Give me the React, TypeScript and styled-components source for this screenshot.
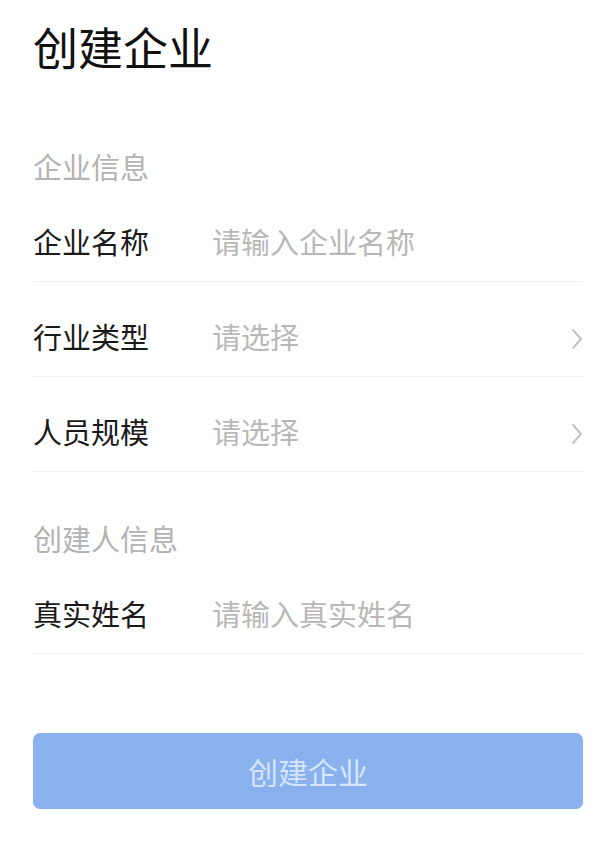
import styled, { createGlobalStyle } from "styled-components";

const GlobalStyle = createGlobalStyle`
  body {
    margin: 0;
    background: #ffffff;
    font-family: "Noto Sans CJK SC", "Noto Sans", sans-serif;
  }
`;

const Page = styled.div`
  padding: 20px 23px 0 33px;
`;

const Title = styled.h1`
  margin: 0 0 26px;
  font-size: 45px;
  line-height: 54px;
  font-weight: 400;
  color: #111111;
`;

const Section = styled.section`
  padding-top: 46px;
`;

const SectionTitle = styled.div`
  font-size: 29px;
  line-height: 41px;
  color: #b3b3b3;
`;

const Row = styled.label`
  display: flex;
  align-items: center;
  padding: 34px 0 19px;
  border-bottom: 1px solid #efefef;
`;

const Label = styled.span`
  width: 179px;
  flex-shrink: 0;
  font-size: 29px;
  line-height: 41px;
  color: #1a1a1a;
`;

const Input = styled.input`
  flex: 1;
  min-width: 0;
  border: none;
  outline: none;
  padding: 0;
  background: transparent;
  font-family: inherit;
  font-size: 29px;
  line-height: 41px;
  color: #1a1a1a;
  &::placeholder {
    color: #b8b8b8;
  }
`;

const Picker = styled.span`
  flex: 1;
  font-size: 29px;
  line-height: 41px;
  color: #b8b8b8;
`;

const Chevron = styled.svg`
  width: 12px;
  height: 22px;
  margin-top: 4px;
  flex-shrink: 0;
`;

const SubmitButton = styled.button`
  display: block;
  width: 100%;
  height: 76px;
  margin-top: 79px;
  border: none;
  border-radius: 7px;
  background: #88b1ee;
  font-family: inherit;
  font-size: 30px;
  color: #d6e5f9;
  cursor: pointer;
`;

interface IField {
  label: string;
  placeholder: string;
  select?: boolean;
}

const companyFields: IField[] = [
  { label: "企业名称", placeholder: "请输入企业名称" },
  { label: "行业类型", placeholder: "请选择", select: true },
  { label: "人员规模", placeholder: "请选择", select: true },
];

const creatorFields: IField[] = [
  { label: "真实姓名", placeholder: "请输入真实姓名" },
];

function FieldRow({ field }: { field: IField }) {
  return (
    <Row>
      <Label>{field.label}</Label>
      {field.select ? (
        <>
          <Picker>{field.placeholder}</Picker>
          <Chevron viewBox="0 0 12 22">
            <polyline
              points="2,2 10,11 2,20"
              fill="none"
              stroke="#c2c2c2"
              strokeWidth="2"
              strokeLinecap="round"
              strokeLinejoin="round"
            />
          </Chevron>
        </>
      ) : (
        <Input placeholder={field.placeholder} />
      )}
    </Row>
  );
}

function App() {
  return (
    <Page>
      <GlobalStyle />
      <Title>创建企业</Title>
      <Section>
        <SectionTitle>企业信息</SectionTitle>
        {companyFields.map((f) => (
          <FieldRow key={f.label} field={f} />
        ))}
      </Section>
      <Section>
        <SectionTitle>创建人信息</SectionTitle>
        {creatorFields.map((f) => (
          <FieldRow key={f.label} field={f} />
        ))}
      </Section>
      <SubmitButton>创建企业</SubmitButton>
    </Page>
  );
}

export default App;
